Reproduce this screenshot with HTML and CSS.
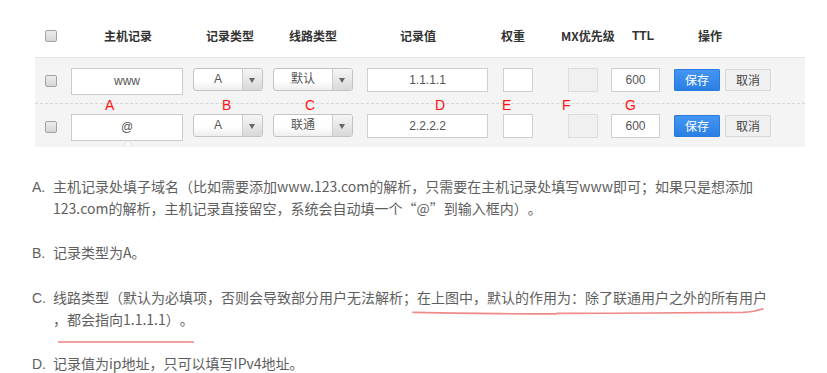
FILE: index.html
```html
<!DOCTYPE html>
<html lang="zh-CN">
<head>
<meta charset="utf-8">
<title>解析记录</title>
<link rel="stylesheet" href="styles.css">
</head>
<body>
<div class="page">
  <div class="records">
    <div class="thead">
      <span class="cb"></span>
      <span class="th th-host">主机记录</span>
      <span class="th th-type">记录类型</span>
      <span class="th th-line">线路类型</span>
      <span class="th th-value">记录值</span>
      <span class="th th-weight">权重</span>
      <span class="th th-mx">MX优先级</span>
      <span class="th th-ttl">TTL</span>
      <span class="th th-op">操作</span>
    </div>
    <div class="panel">
      <div class="row row-first">
        <span class="cb cb-row"></span>
        <div class="field host">www</div>
        <div class="select type"><span class="val">A</span><span class="arrow"></span></div>
        <div class="select line"><span class="val">默认</span><span class="arrow"></span></div>
        <div class="field value">1.1.1.1</div>
        <div class="field weight"></div>
        <div class="field mx"></div>
        <div class="field ttl">600</div>
        <button class="btn save">保存</button>
        <button class="btn cancel">取消</button>
      </div>
      <div class="row">
        <span class="cb cb-row"></span>
        <div class="field host tip">@</div>
        <div class="select type"><span class="val">A</span><span class="arrow"></span></div>
        <div class="select line"><span class="val">联通</span><span class="arrow"></span></div>
        <div class="field value">2.2.2.2</div>
        <div class="field weight"></div>
        <div class="field mx"></div>
        <div class="field ttl">600</div>
        <button class="btn save">保存</button>
        <button class="btn cancel">取消</button>
      </div>
      <span class="tag tag-a">A</span>
      <span class="tag tag-b">B</span>
      <span class="tag tag-c">C</span>
      <span class="tag tag-d">D</span>
      <span class="tag tag-e">E</span>
      <span class="tag tag-f">F</span>
      <span class="tag tag-g">G</span>
    </div>
  </div>

  <div class="notes">
    <p class="note"><span class="mark">A.</span>主机记录处填子域名（比如需要添加www.123.com的解析，只需要在主机记录处填写www即可；如果只是想添加<br>123.com的解析，主机记录直接留空，系统会自动填一个“@”到输入框内）。</p>
    <p class="note"><span class="mark">B.</span>记录类型为A。</p>
    <p class="note"><span class="mark">C.</span>线路类型（默认为必填项，否则会导致部分用户无法解析；<span class="hl">在上图中，默认的作用为：除了联通用户之外的所有用户<svg class="wave" viewBox="0 0 350 8" preserveAspectRatio="none"><path d="M0 5.4 C 47 6.2 97 7 143 6.9 L 144 6.4 C 207 6.4 277 6 330 5.4 C 339 5 345 3.6 350 1.8" fill="none" stroke="#f08a8a" stroke-width="1.6" stroke-linecap="round" vector-effect="non-scaling-stroke"/></svg></span><br><span class="hl2">，都会指向1.1.1.1）。</span></p>
    <p class="note"><span class="mark">D.</span>记录值为ip地址，只可以填写IPv4地址。</p>
  </div>
</div>
</body>
</html>
```

FILE: styles.css
```css
* {
  box-sizing: border-box;
}

html, body {
  margin: 0;
  padding: 0;
  background: #ffffff;
}

body {
  font-family: "Noto Sans CJK SC", "Liberation Sans", sans-serif;
  color: #5e5e5e;
  text-autospace: no-autospace;
  text-spacing-trim: space-all;
}

.page {
  position: relative;
  width: 827px;
  height: 373px;
  overflow: hidden;
}

/* ---------- records table ---------- */
.records {
  margin-left: 35px;
  width: 770px;
}

.thead {
  display: flex;
  align-items: center;
  height: 24px;
  margin-top: 24px;
  margin-bottom: 9px;
  padding-left: 10px;
}

.cb {
  flex: none;
  display: block;
  width: 12px;
  height: 12px;
  border: 1px solid #a2a2a2;
  border-radius: 2px;
  background: linear-gradient(#ececec, #d6d6d6);
}

.th {
  flex: none;
  text-align: center;
  font-size: 12px;
  font-weight: bold;
  color: #333333;
  line-height: 16px;
  white-space: nowrap;
}

.th-host { width: 80px; margin-left: 31px; }
.th-type { width: 80px; margin-left: 22px; }
.th-line { width: 80px; margin-left: 3px; }
.th-value { width: 80px; margin-left: 25px; }
.th-weight { width: 50px; margin-left: 30px; }
.th-mx { width: 60px; margin-left: 20px; }
.th-ttl { width: 40px; margin-left: 5px; font-family: "Liberation Sans", "Noto Sans CJK SC", sans-serif; }
.th-op { width: 60px; margin-left: 17px; }

.panel {
  position: relative;
  background: #f4f4f4;
  border-top: 1px solid #e4e4e4;
}

.row {
  display: flex;
  align-items: flex-start;
  padding: 10px 0 6px 10px;
}

.row-first {
  padding-bottom: 8px;
  border-bottom: 1px dashed #d6d6d6;
}

.cb-row {
  margin-top: 7px;
}

.field {
  flex: none;
  height: 24px;
  border: 1px solid #cfcfcf;
  background: #ffffff;
  font-family: "Liberation Sans", "Noto Sans CJK SC", sans-serif;
  font-size: 12px;
  line-height: 22px;
  color: #555555;
  text-align: center;
}

.host {
  position: relative;
  width: 112px;
  height: 27px;
  line-height: 25px;
  margin-left: 14px;
  border-color: #cccccc;
}

.host.tip::before,
.host.tip::after {
  content: "";
  position: absolute;
  left: 50%;
  width: 0;
  height: 0;
  border-style: solid;
  border-color: transparent;
}

.host.tip::before {
  top: 100%;
  margin-left: -4px;
  border-width: 0 5px 5px 5px;
  border-bottom-color: #dadada;
}

.host.tip::after {
  top: 100%;
  margin-top: 1px;
  margin-left: -3px;
  border-width: 0 4px 4px 4px;
  border-bottom-color: #fbfbfb;
}

.value { width: 121px; margin-left: 14px; }
.weight { width: 30px; margin-left: 15px; }
.mx {
  width: 30px;
  margin-left: 35px;
  background: #f0f0f0;
  border-color: #dcdcdc;
}
.ttl { width: 49px; margin-left: 13px; }

.select {
  flex: none;
  display: flex;
  height: 23px;
  margin-left: 10px;
  border: 1px solid #c4c4c4;
  border-radius: 3px;
  background: linear-gradient(#ffffff 55%, #eeeeee);
  overflow: hidden;
}

.select .val {
  flex: 1;
  text-align: center;
  font-size: 12px;
  line-height: 21px;
  color: #555555;
  font-family: "Liberation Sans", "Noto Sans CJK SC", sans-serif;
}

.select .arrow {
  position: relative;
  flex: none;
  width: 20px;
  border-left: 1px solid #cccccc;
  background: linear-gradient(#f6f6f6, #d8d8d8);
}

.select .arrow::after {
  content: "";
  position: absolute;
  left: 6px;
  top: 9px;
  width: 0;
  height: 0;
  border-style: solid;
  border-width: 5px 3.5px 0 3.5px;
  border-color: #666666 transparent transparent transparent;
}

.type { width: 70px; }
.line { width: 80px; }

.btn {
  flex: none;
  width: 46px;
  height: 22px;
  margin-top: 1px;
  padding: 0;
  font-family: "Noto Sans CJK SC", sans-serif;
  font-size: 12px;
  line-height: 20px;
  border-radius: 1px;
  cursor: pointer;
}

.save {
  margin-left: 14px;
  color: #ffffff;
  border: 1px solid #2b7bdc;
  background: linear-gradient(#4496f2, #2a7fe4);
}

.cancel {
  margin-left: 5px;
  color: #444444;
  border: 1px solid #d8d8d8;
  background: #f0f0f0;
}

.tag {
  position: absolute;
  top: 40px;
  font-family: "Liberation Sans", sans-serif;
  font-size: 14px;
  line-height: 14px;
  color: #ff1010;
}

.tag-a { left: 70px; }
.tag-b { left: 187px; }
.tag-c { left: 270px; }
.tag-d { left: 400px; }
.tag-e { left: 467px; }
.tag-f { left: 527px; }
.tag-g { left: 590px; }

/* ---------- notes ---------- */
.notes {
  margin-top: 29px;
}

.note {
  margin: 0 0 23px 0;
  padding-left: 53px;
  text-indent: -21px;
  font-size: 14px;
  line-height: 21px;
  white-space: nowrap;
  color: #5e5e5e;
}

.mark {
  display: inline-block;
  width: 21px;
  text-indent: 0;
  font-family: "Liberation Sans", sans-serif;
}

.hl {
  position: relative;
}

.wave {
  position: absolute;
  left: -4px;
  right: 4px;
  top: 100%;
  width: calc(100% + 0px);
  height: 8px;
  overflow: visible;
  pointer-events: none;
}

.hl2 {
  position: relative;
}

.hl2::after {
  content: "";
  position: absolute;
  left: 5px;
  right: 0;
  top: 100%;
  margin-top: 12px;
  height: 2px;
  background: #f3a0a0;
}
```
